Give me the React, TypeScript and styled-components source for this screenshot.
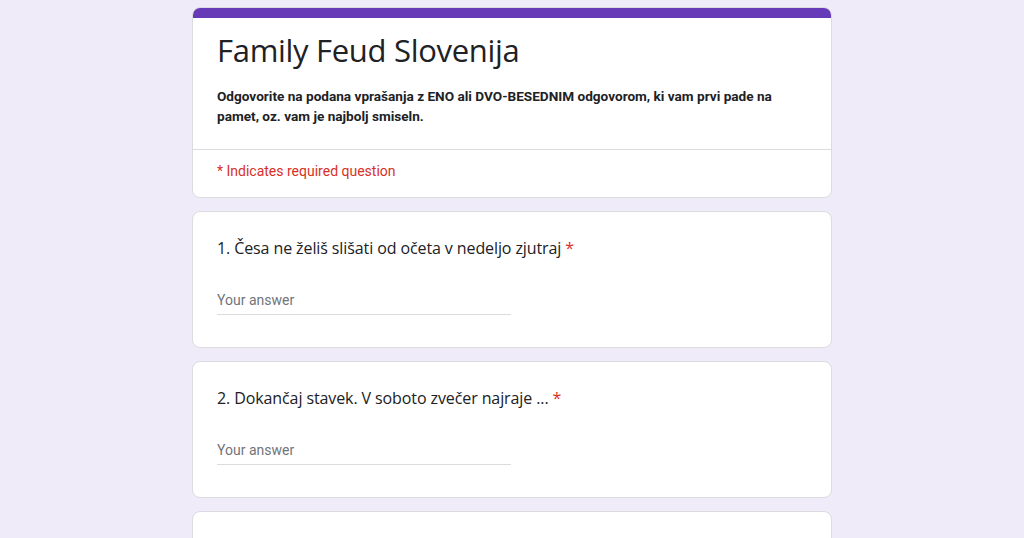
import React from "react";
import styled, { createGlobalStyle } from "styled-components";

const Global = createGlobalStyle`
  html, body { margin: 0; padding: 0; background: #f0ebf8; }
  body { font-family: Roboto, "Noto Sans", Arial, sans-serif; overflow: hidden; }
`;

const Page = styled.div`
  width: 640px;
  margin: 0 auto;
  padding-top: 7px;
  display: flex;
  flex-direction: column;
  gap: 13px;
`;

const Card = styled.div`
  background: #fff;
  border: 1px solid #dadce0;
  border-radius: 8px;
  overflow: hidden;
  display: flex;
  flex-direction: column;
`;

const TopBar = styled.div`
  height: 10px;
  background: #673ab7;
`;

const Header = styled.div`
  padding: 8px 24px 23px;
`;

const Title = styled.h1`
  margin: 0;
  font-family: "Open Sans", Roboto, sans-serif;
  font-weight: 400;
  font-size: 31px;
  line-height: 48px;
  color: #202124;
  letter-spacing: -0.3px;
`;

const Description = styled.p`
  margin: 12px 0 0;
  font-weight: 700;
  font-size: 13.6px;
  line-height: 20px;
  color: #202124;
`;

const Divider = styled.div`
  height: 1px;
  background: #dadce0;
`;

const Required = styled.div`
  padding: 12px 24px 17px;
  font-size: 14px;
  line-height: 18px;
  color: #d93025;
`;

const QuestionBody = styled.div`
  padding: 24px 24px 32px;
  min-height: 78px;
`;

const QuestionText = styled.div`
  font-family: "Open Sans", Roboto, sans-serif;
  font-size: 16px;
  line-height: 24px;
  color: #202124;
  letter-spacing: -0.1px;
`;

const Star = styled.span`
  color: #d93025;
  margin-left: 4px;
`;

const Answer = styled.input`
  display: block;
  margin-top: 30px;
  width: 294px;
  border: none;
  border-bottom: 1px solid #dadce0;
  padding: 0 0 4px;
  outline: none;
  font-family: Roboto, sans-serif;
  font-size: 14px;
  line-height: 20px;
  color: #202124;
  background: transparent;
  &::placeholder { color: #70757a; }
`;

const questions = [
  "1. Česa ne želiš slišati od očeta v nedeljo zjutraj",
  "2. Dokančaj stavek. V soboto zvečer najraje ...",
];

export default function App() {
  return (
    <>
      <Global />
      <Page>
        <Card>
          <TopBar />
          <Header>
            <Title>Family Feud Slovenija</Title>
            <Description>
              Odgovorite na podana vprašanja z ENO ali DVO-BESEDNIM odgovorom, ki vam prvi pade na pamet, oz. vam je najbolj smiseln.
            </Description>
          </Header>
          <Divider />
          <Required>* Indicates required question</Required>
        </Card>
        {questions.map((q) => (
          <Card key={q}>
            <QuestionBody>
              <QuestionText>
                {q}
                <Star>*</Star>
              </QuestionText>
              <Answer placeholder="Your answer" />
            </QuestionBody>
          </Card>
        ))}
        <Card>
          <QuestionBody />
        </Card>
      </Page>
    </>
  );
}
